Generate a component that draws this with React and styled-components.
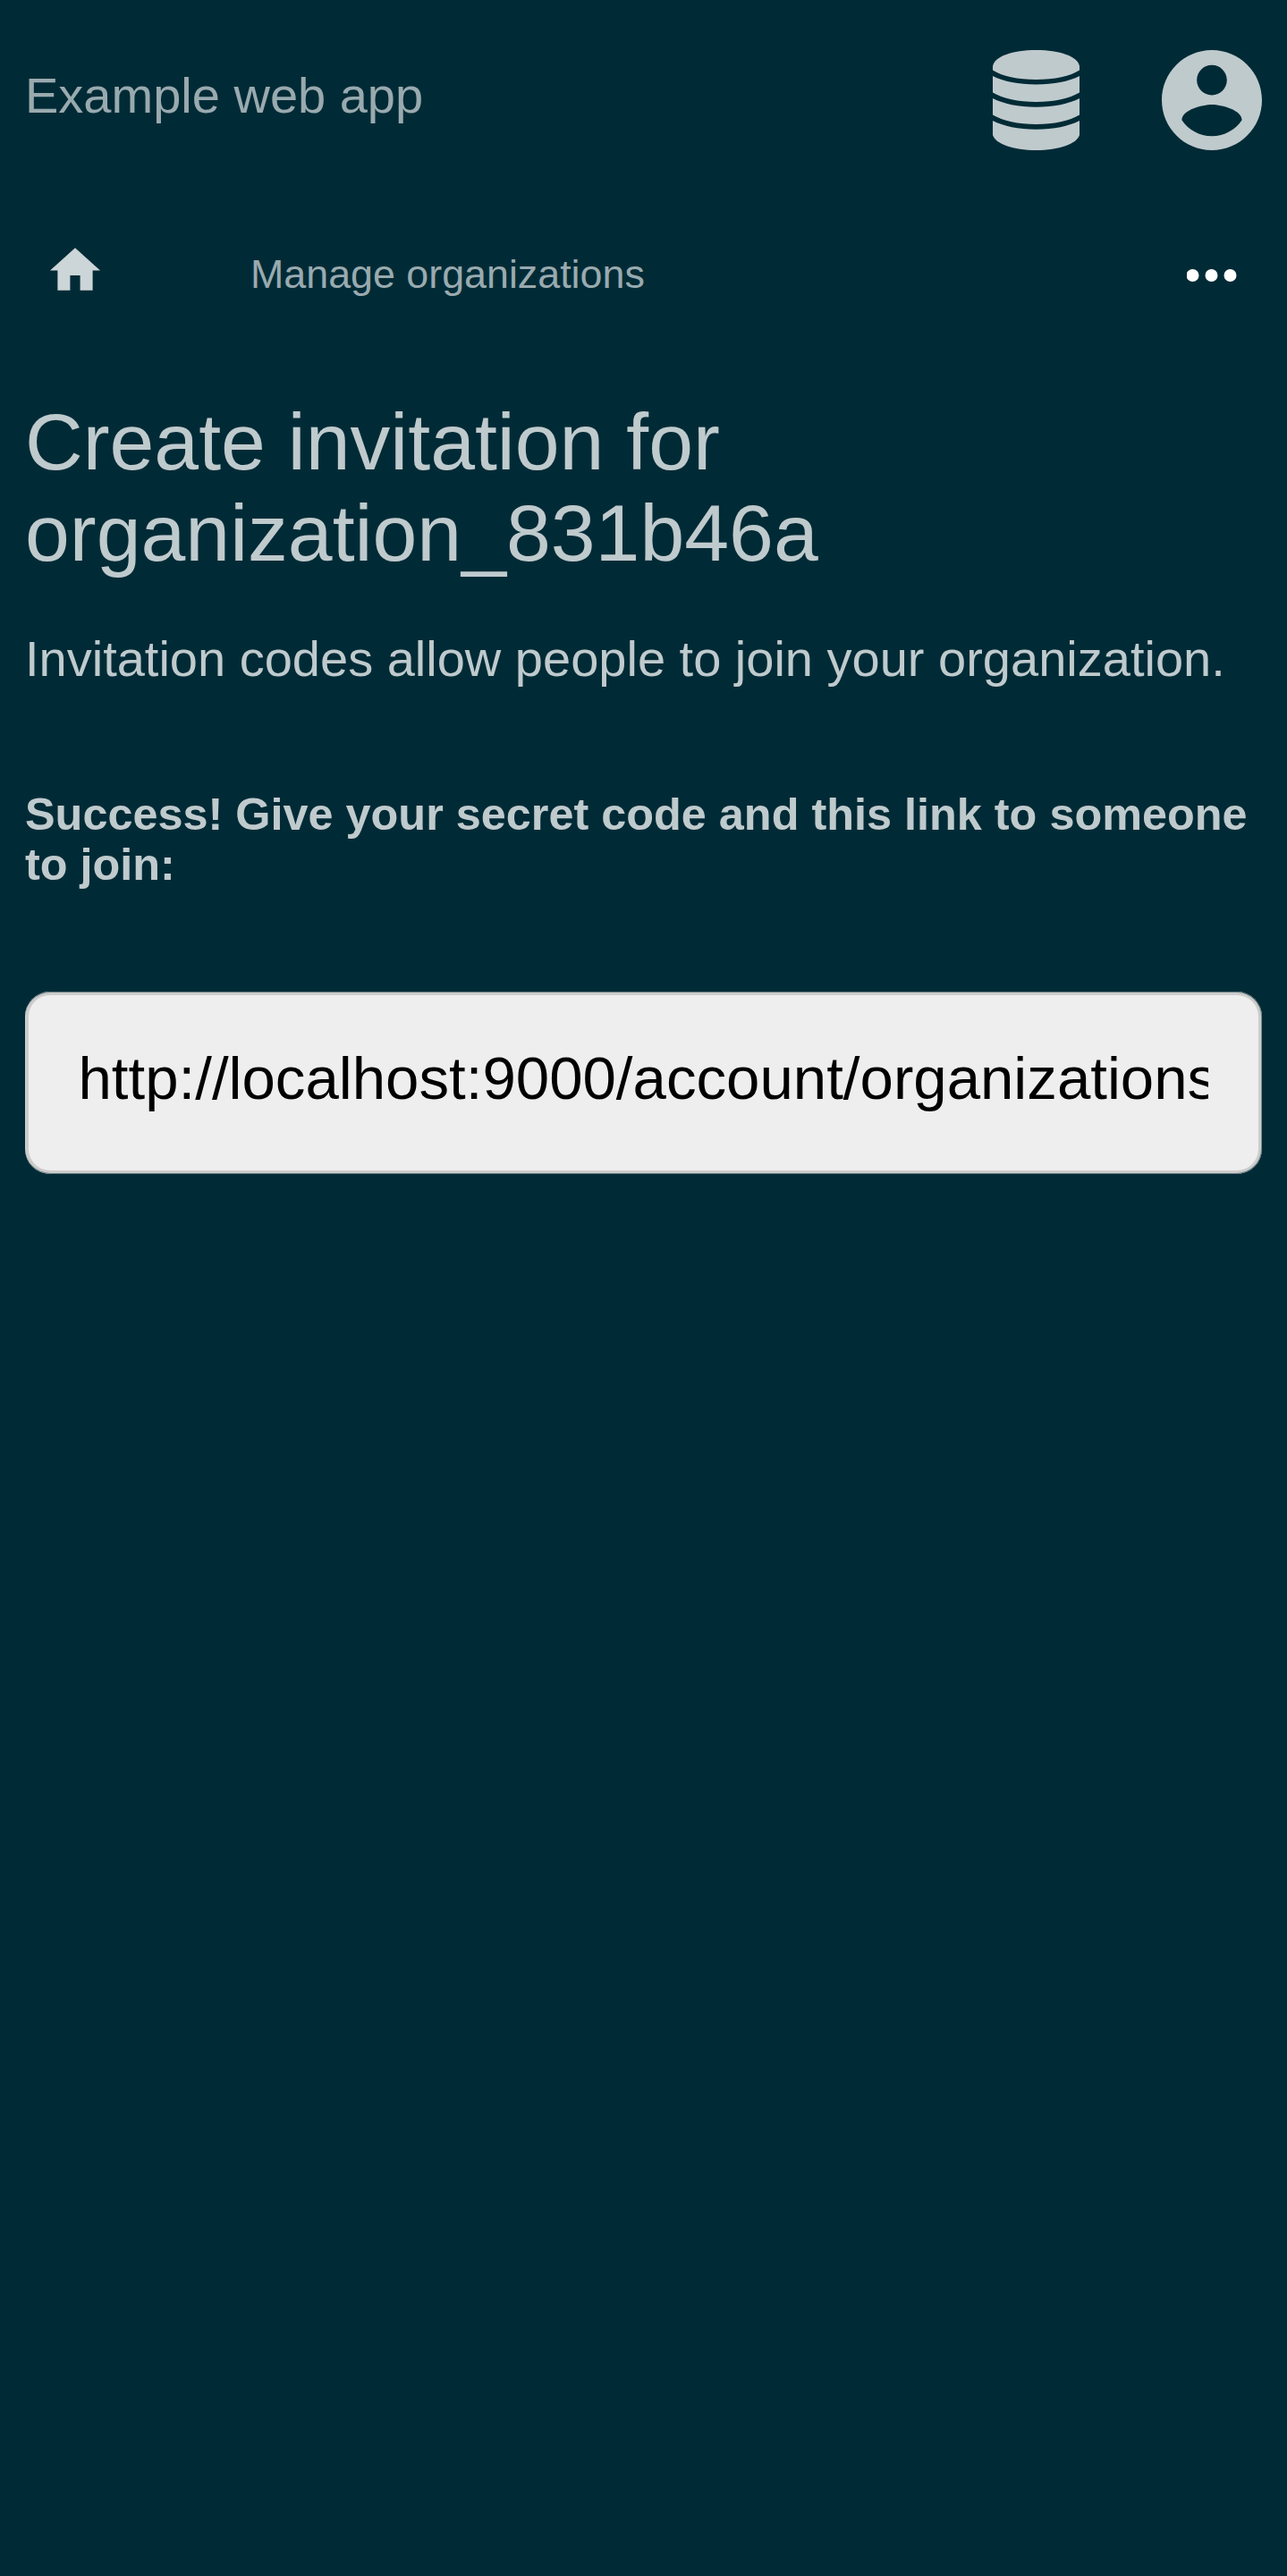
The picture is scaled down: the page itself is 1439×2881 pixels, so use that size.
import React from "react";
import styled, { createGlobalStyle } from "styled-components";

const GlobalStyle = createGlobalStyle`
  html, body { margin: 0; background: #002b36; }
  *, *::before, *::after { box-sizing: border-box; }
`;

const Page = styled.div`
  min-height: 2881px;
  background: #002b36;
  color: #bfcacd;
  font-family: "Liberation Sans", Arial, sans-serif;
  font-size: 56px;
`;

const Header = styled.header`
  display: flex;
  align-items: center;
  justify-content: space-between;
  height: 224px;
  padding: 0 28px;
`;

const AppName = styled.div`
  line-height: 64px;
  padding-bottom: 10px;
  color: #99aaaf;
`;

const HeaderActions = styled.div`
  display: flex;
  align-items: center;
  gap: 92px;
`;

const Icon = styled.svg`
  display: block;
  width: ${(p) => p.$w}px;
  height: ${(p) => p.$h}px;
  fill: ${(p) => p.$color || "#bfcacd"};
`;

const Nav = styled.nav`
  display: flex;
  align-items: flex-start;
  height: 168px;
  padding: 53px 56px 0;
`;

const NavLink = styled.div`
  margin: 3px 0 0 168px;
  font-size: 44.8px;
  line-height: 52px;
  color: #99aaaf;
`;

const NavMenu = styled.div`
  margin: 24px 0 0 auto;
`;

const Main = styled.main`
  padding: 51px 28px 0;
`;

const Title = styled.h1`
  margin: 0;
  max-width: 1100px;
  font-size: 89.6px;
  font-weight: 400;
  line-height: 102px;
`;

const Intro = styled.p`
  margin: 58px 0 0;
  line-height: 64px;
`;

const Success = styled.p`
  margin: 114px 0 0;
  font-size: 50.4px;
  font-weight: 700;
  line-height: 56px;
`;

const LinkInput = styled.input`
  display: block;
  width: 100%;
  height: 204px;
  margin: 114px 0 0;
  padding: 58px 60px 70px 59.5px;
  border: 0;
  border-radius: 28px;
  outline: 0;
  background: #eee;
  box-shadow:
    inset 0 1px 0 rgba(0, 43, 54, 0.5),
    inset 0 -1px 0 rgba(0, 43, 54, 0.5),
    inset -1px 0 0 rgba(0, 43, 54, 0.4),
    inset 0 0 0 4px #ccc;
  color: #000;
  font: 67.2px/76px "Liberation Sans", Arial, sans-serif;
`;

const DatabaseIcon = () => (
  <Icon $w={97} $h={112} viewBox="0 0 97 112">
    <path d="M0 18C2 7 22 0 48.500 0S95 7 97 18V22.500C87 29 69 33 48.500 33S10 29 0 22.500Z" />
    <path d="M0 29C12 35 29 38.500 48.500 38.500S85 35 97 29V47.500C86 54 68 58 48.500 58S11 54 0 47.500Z" />
    <path d="M0 54C12 60 29 63.800 48.500 63.800S85 60 97 54V72.500C86 79 68 83 48.500 83S11 79 0 72.500Z" />
    <path d="M0 79C12 85 29 88.800 48.500 88.800S85 85 97 79V95C94 105 74 112 48.500 112S3 105 0 95Z" />
  </Icon>
);

const AccountIcon = () => (
  <Icon $w={112} $h={112} viewBox="2 2 20 20">
    <path d="M12 2C6.480 2 2 6.480 2 12s4.480 10 10 10 10-4.480 10-10S17.520 2 12 2zm0 3c1.660 0 3 1.340 3 3s-1.340 3-3 3-3-1.340-3-3 1.340-3 3-3zm0 14.200c-2.500 0-4.710-1.280-6-3.220.030-1.990 4-3.080 6-3.080 1.990 0 5.970 1.090 6 3.080-1.290 1.940-3.500 3.220-6 3.220z" />
  </Icon>
);

const HomeIcon = () => (
  <Icon $w={56} $h={48} $color="#ccd5d7" viewBox="2 3 20 17">
    <path d="M10 20v-6h4v6h5v-8h3L12 3 2 12h3v8z" />
  </Icon>
);

const MoreIcon = () => (
  <Icon $w={56} $h={14} $color="#fff" viewBox="0 0 56 14">
    <circle cx="6.500" cy="7" r="7" />
    <circle cx="27.500" cy="7" r="7" />
    <circle cx="48.500" cy="7" r="7" />
  </Icon>
);

export default function App() {
  return (
    <Page>
      <GlobalStyle />
      <Header>
        <AppName>Example web app</AppName>
        <HeaderActions>
          <DatabaseIcon />
          <AccountIcon />
        </HeaderActions>
      </Header>
      <Nav>
        <HomeIcon />
        <NavLink>Manage organizations</NavLink>
        <NavMenu>
          <MoreIcon />
        </NavMenu>
      </Nav>
      <Main>
        <Title>Create invitation for organization_831b46a</Title>
        <Intro>Invitation codes allow people to join your organization.</Intro>
        <Success>Success! Give your secret code and this link to someone to join:</Success>
        <LinkInput readOnly value="http://localhost:9000/account/organizations" />
      </Main>
    </Page>
  );
}
